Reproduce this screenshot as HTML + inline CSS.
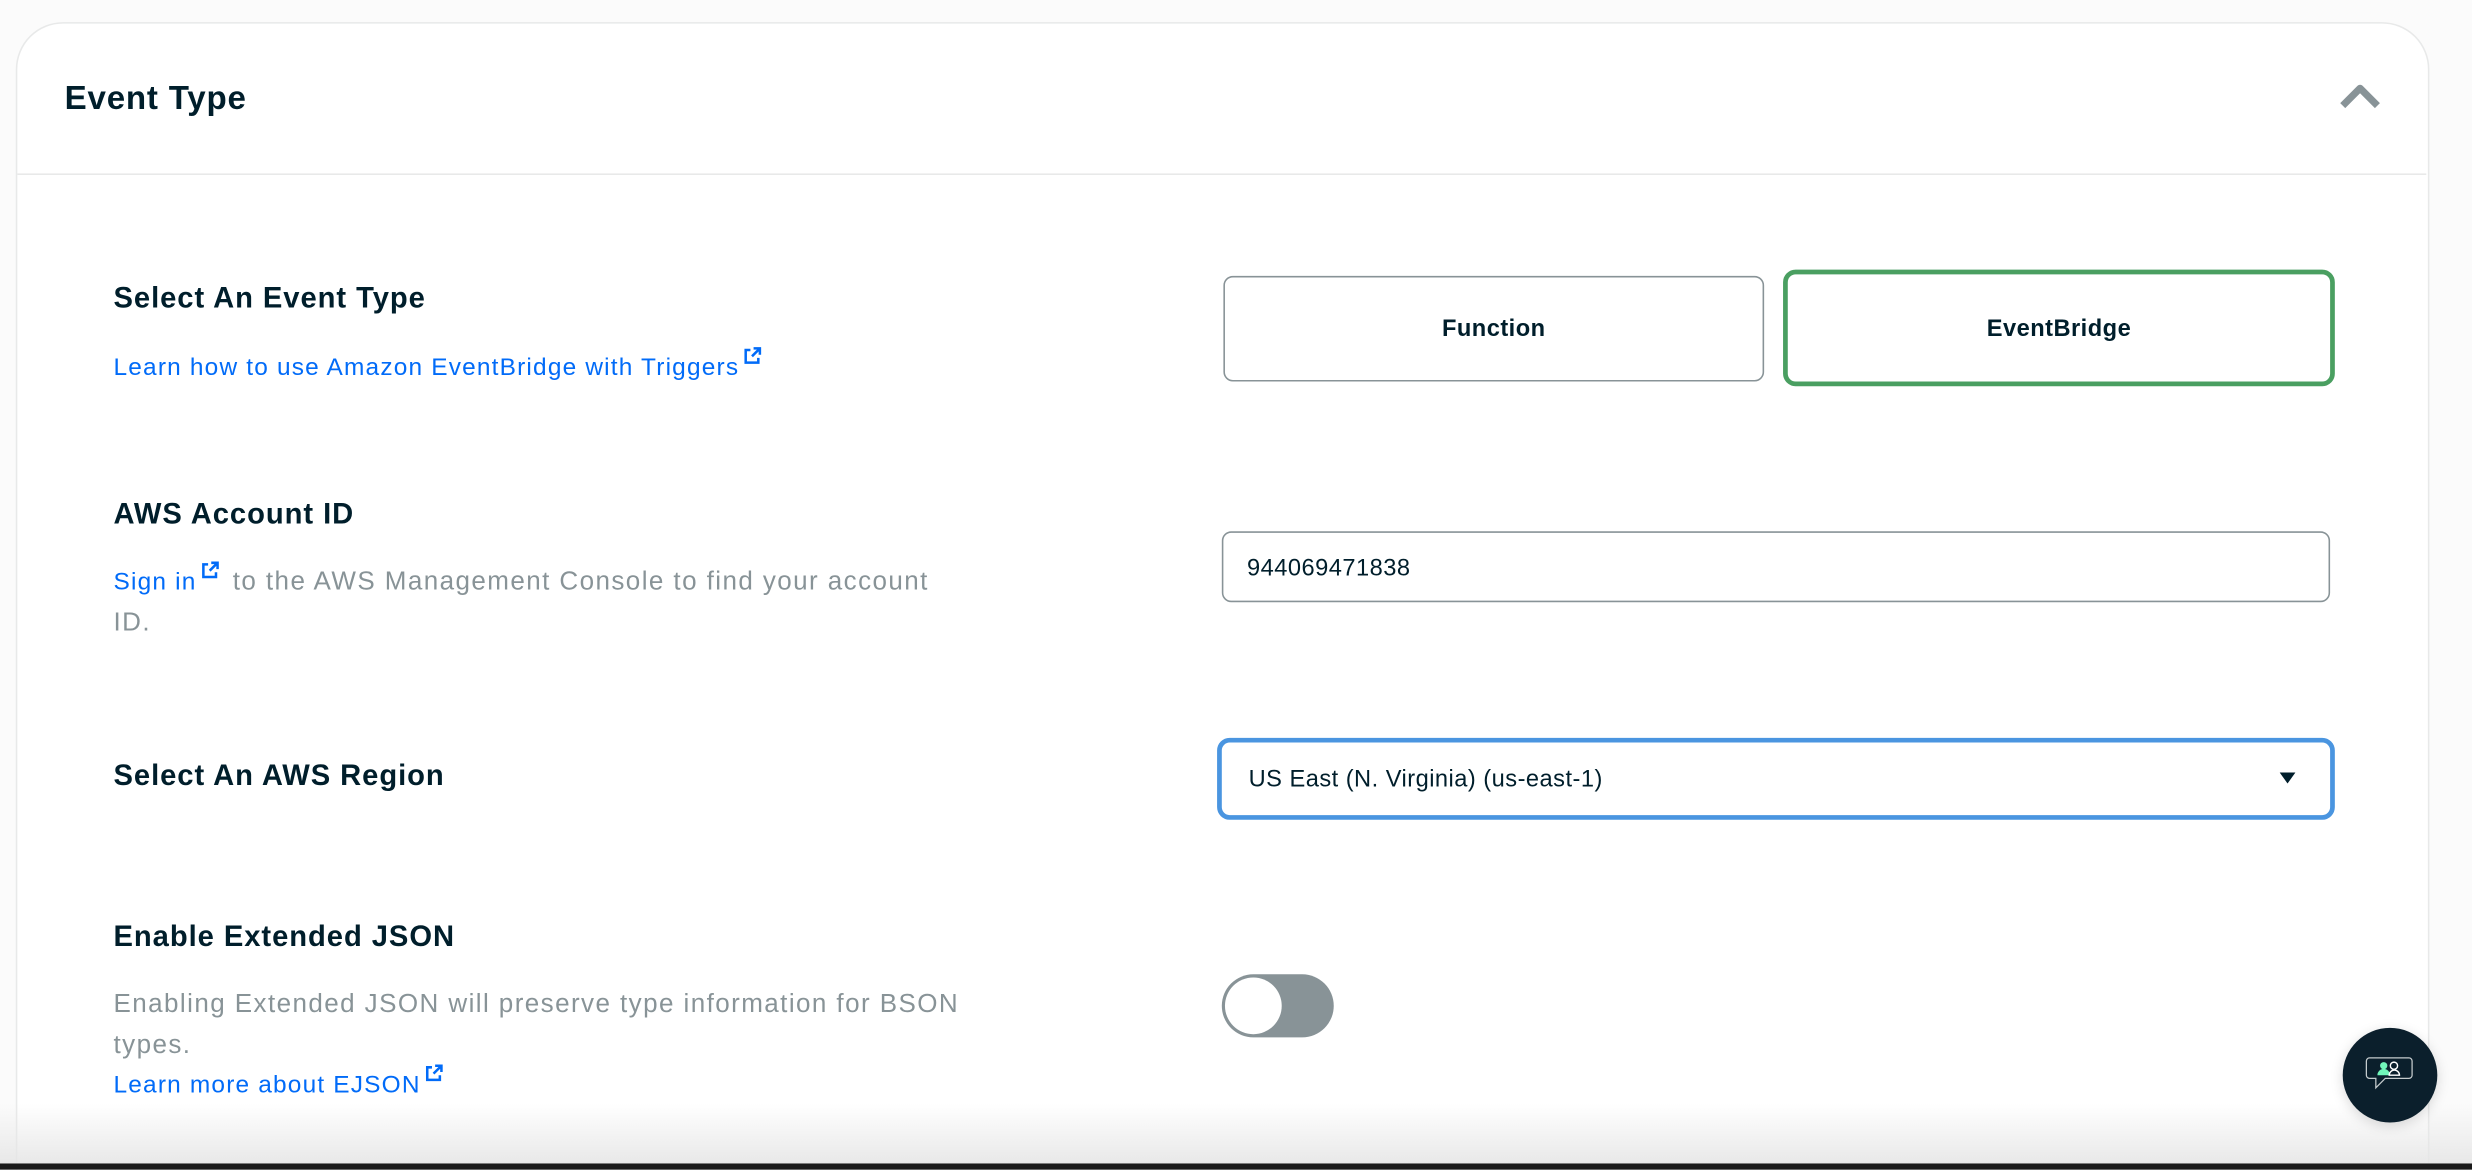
<!DOCTYPE html>
<html><head><meta charset="utf-8"><style>
html,body{margin:0;padding:0;width:2472px;height:1170px;overflow:hidden;background:#fbfbfb;}
#s{position:absolute;left:0;top:0;width:1568px;height:742px;transform:scale(1.57653);transform-origin:0 0;font-family:"Liberation Sans",sans-serif;background:#fbfbfb;overflow:hidden;}
.card{position:absolute;left:10px;top:14px;width:1529px;height:760px;background:#fff;border:1px solid #e8e9e9;border-radius:30px;}
.a{position:absolute;white-space:nowrap;}
.h{font-weight:bold;color:#001e2b;font-size:18.5px;letter-spacing:0.6px;}
.lnk{color:#016bf8;font-size:15.5px;letter-spacing:0.75px;}
.g{color:#889397;font-size:16.5px;letter-spacing:0.9px;}
.btn{position:absolute;box-sizing:border-box;background:#fff;display:flex;align-items:center;justify-content:center;font-weight:bold;font-size:15px;color:#001e2b;letter-spacing:0.3px;}
</style></head><body><div id="s">
<div class="card"></div>
<div class="a" style="left:11px;top:110px;width:1528px;height:1px;background:#e8e9e9"></div>
<div class="a h" style="left:41px;top:51px;font-size:21px;letter-spacing:0.5px">Event Type</div>
<svg class="a" style="left:1483px;top:52px" width="28" height="18" viewBox="0 0 28 18"><path d="M3 15 L14 4 L25 15" stroke="#889397" stroke-width="4.5" fill="none" stroke-linejoin="round"/></svg>

<div class="a h" style="left:72px;top:178px">Select An Event Type</div>
<div class="a lnk" style="left:72px;top:225px">Learn how to use Amazon EventBridge with Triggers<svg width="12" height="12" viewBox="0 0 12 12" style="position:relative;top:-6px;left:2px"><path d="M5 2H2v8h8V7M7 1h4v4M11 1L6 6" stroke="#016bf8" stroke-width="1.6" fill="none"/></svg></div>
<div class="btn" style="left:776px;top:175px;width:343px;height:67px;border:1px solid #889397;border-radius:6px">Function</div>
<div class="btn" style="left:1131px;top:171px;width:350px;height:74px;border:3px solid #4a9f61;border-radius:8px">EventBridge</div>

<div class="a h" style="left:72px;top:315px">AWS Account ID</div>
<div class="a g" style="left:72px;top:360px"><span class="lnk">Sign in<svg width="12" height="12" viewBox="0 0 12 12" style="position:relative;top:-6px;left:2px"><path d="M5 2H2v8h8V7M7 1h4v4M11 1L6 6" stroke="#016bf8" stroke-width="1.6" fill="none"/></svg></span>&nbsp; to the AWS Management Console to find your account</div>
<div class="a g" style="left:72px;top:386px">ID.</div>
<div class="a" style="left:775px;top:337px;width:703px;height:45px;box-sizing:border-box;border:1px solid #889397;border-radius:6px;background:#fff"></div>
<div class="a" style="left:791px;top:352px;font-size:15px;color:#001e2b;letter-spacing:0.3px">944069471838</div>

<div class="a h" style="left:72px;top:481px">Select An AWS Region</div>
<div class="a" style="left:772px;top:468px;width:709px;height:52px;box-sizing:border-box;border:3px solid #4a95e0;border-radius:8px;background:#fff"></div>
<div class="a" style="left:792px;top:486px;font-size:15px;color:#001e2b;letter-spacing:0.3px">US East (N. Virginia) (us-east-1)</div>
<svg class="a" style="left:1446px;top:490px" width="10" height="8"><path d="M0 0H10L5 7Z" fill="#001e2b"/></svg>

<div class="a h" style="left:72px;top:583px">Enable Extended JSON</div>
<div class="a g" style="left:72px;top:628px">Enabling Extended JSON will preserve type information for BSON</div>
<div class="a g" style="left:72px;top:654px">types.</div>
<div class="a lnk" style="left:72px;top:680px">Learn more about EJSON<svg width="12" height="12" viewBox="0 0 12 12" style="position:relative;top:-6px;left:2px"><path d="M5 2H2v8h8V7M7 1h4v4M11 1L6 6" stroke="#016bf8" stroke-width="1.6" fill="none"/></svg></div>
<div class="a" style="left:775px;top:618px;width:71px;height:40px;border-radius:20px;background:#889397"></div>
<div class="a" style="left:777px;top:620px;width:36px;height:36px;border-radius:18px;background:#fff"></div>

<div class="a" style="left:0;top:700px;width:1568px;height:42px;background:linear-gradient(to bottom,rgba(235,235,235,0),#e6e6e6)"></div>
<div class="a" style="left:0;top:738px;width:1568px;height:4px;background:#1a1a1a"></div>

<div class="a" style="left:1486px;top:652px;width:60px;height:60px;border-radius:30px;background:#0b1f2c;box-shadow:0 2px 8px rgba(0,0,0,.15)"></div>
<svg class="a" style="left:1500px;top:666px" width="32" height="32" viewBox="0 0 32 32"><path d="M3 5h25a2 2 0 0 1 2 2v9a2 2 0 0 1-2 2H13l-6 6v-6H3a2 2 0 0 1-2-2V7a2 2 0 0 1 2-2z" fill="none" stroke="#c5cbcd" stroke-width="0.8"/><circle cx="12" cy="10" r="2.3" fill="#71f6ba"/><path d="M8 16a4 4 0 0 1 8 0z" fill="#71f6ba"/><circle cx="18.5" cy="10" r="2.3" fill="none" stroke="#fff" stroke-width="0.9"/><path d="M15.5 16a3 3 0 0 1 6.5 0z" fill="none" stroke="#fff" stroke-width="0.9"/></svg>
</div></body></html>
